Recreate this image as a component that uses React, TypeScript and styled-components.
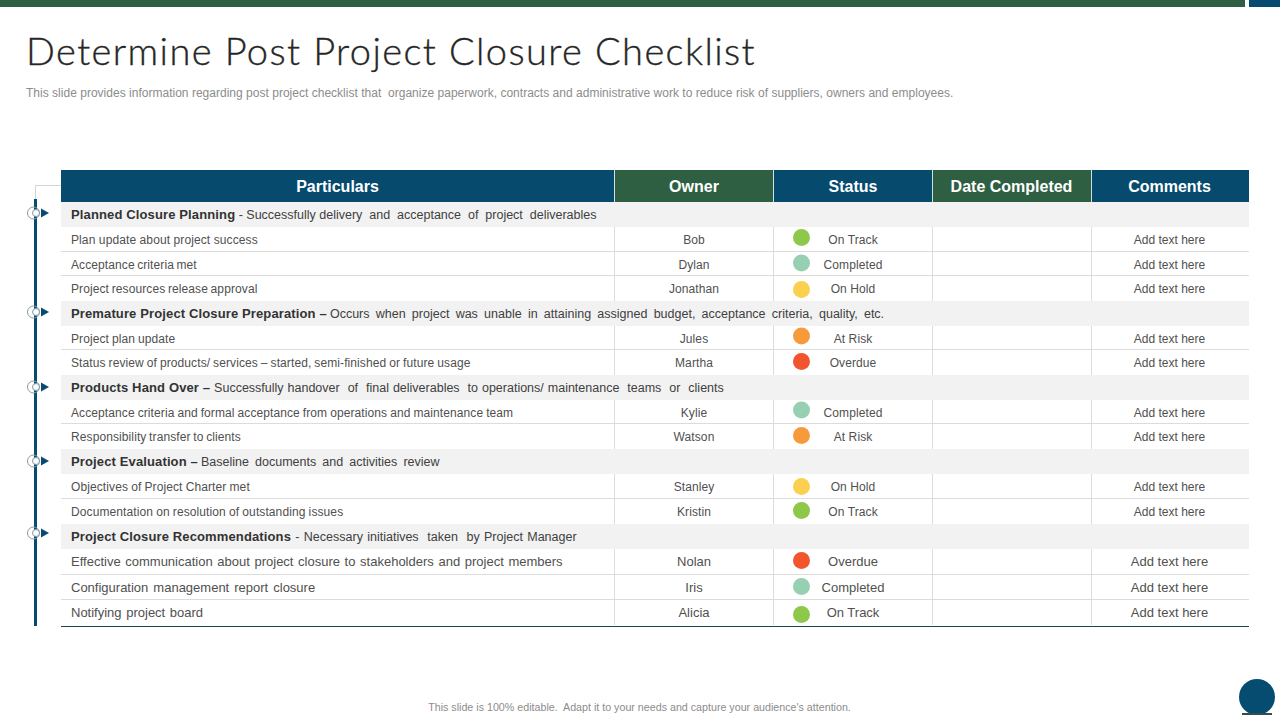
import React from "react";
import styled, { createGlobalStyle } from "styled-components";

const Global = createGlobalStyle`
  html, body { margin: 0; padding: 0; background: #fff; }
  body { width: 1280px; height: 720px; overflow: hidden; font-family: "Liberation Sans", Arial, sans-serif; }
`;

const Page = styled.div`
  width: 1280px; height: 720px; display: flex; flex-direction: column; position: relative; overflow: hidden;
`;
const TopBar = styled.div`
  height: 7px; display: grid; grid-template-columns: 1245px 1fr; column-gap: 4px; flex: none;
`;
const BarPiece = styled.div<{ $c: string }>`background: ${p => p.$c};`;
const Title = styled.h1`
  margin: 20px 0 0 26px; font-family: "Lato", sans-serif; font-weight: 300; font-size: 38px; line-height: 46px;
  color: #262626; letter-spacing: 1.4px; white-space: nowrap; -webkit-text-stroke: 0.35px #262626;
`;
const Sub = styled.p`
  margin: 12px 0 0 26px; font-size: 12px; line-height: 16px; color: #8c8c8c; white-space: pre; letter-spacing: 0.01px; word-spacing: 0.05px;
`;
const Body = styled.div`
  margin-top: 69px; display: flex; padding-left: 27px;
`;
const Rail = styled.div`
  width: 34px; height: 456px; position: relative; flex: none;
`;
const RailLine = styled.div`
  position: absolute; left: 7px; top: 29px; bottom: 0; width: 3px; background: #064c70;
`;
const RailElbow = styled.div`
  position: absolute; left: 8px; top: 15px; width: 26px; height: 15px; border-left: 1px solid #d4d4d4; border-top: 1px solid #d4d4d4; box-sizing: border-box;
`;
const MarkerWrap = styled.svg<{ $top: number }>`
  position: absolute; left: 0; top: ${p => p.$top}px; width: 24px; height: 16px;
`;
const Table = styled.div`
  width: 1188px; display: flex; flex-direction: column; border-bottom: 1px solid #16465a; height: 457px; box-sizing: border-box;
`;
const cols = "554px 159px 159px 159px 157px";
const Head = styled.div`
  display: grid; grid-template-columns: ${cols}; height: 32px; flex: none;
`;
const HeadCell = styled.div<{ $green?: boolean; $last?: boolean; $pr?: number }>`
  background: ${p => (p.$green ? "#2f5f43" : "#064a6e")}; color: #fff; font-weight: 700; font-size: 16px; display: flex; align-items: center; justify-content: center;
  padding: 1px ${p => p.$pr ?? 0}px 0 0; box-sizing: border-box;
  border-right: ${p => (p.$last ? "none" : "1px solid #cfe0e0")};
`;
const Section = styled.div<{ $h: number; $ws: number }>`
  height: ${p => p.$h}px; flex: none; background: #f2f2f2; display: flex; align-items: center; padding-left: 10px;
  font-size: 12.5px; color: #404040; white-space: pre; box-sizing: border-box; word-spacing: ${p => p.$ws}px;
`;
const Strong = styled.b`color: #333; font-size: 13px; letter-spacing: 0.13px; word-spacing: 0;`;
const Row = styled.div<{ $h: number; $last?: boolean }>`
  display: grid; grid-template-columns: ${cols}; height: ${p => p.$h}px; flex: none; box-sizing: border-box;
  border-bottom: ${p => (p.$last ? "none" : "1px solid #dcdcdc")};
`;
const Cell = styled.div<{ $big?: boolean; $spread?: number; $pt?: number }>`
  display: flex; align-items: center; justify-content: center; font-size: ${p => (p.$big ? 13 : 12)}px; color: #505050;
  border-right: 1px solid #dcdcdc; white-space: pre; word-spacing: ${p => p.$spread ?? 0}px; box-sizing: border-box;
  padding-top: ${p => p.$pt ?? (p.$big ? 0 : 1)}px; letter-spacing: ${p => (p.$big ? 0 : 0.1)}px;
`;
const Name = styled(Cell)`justify-content: flex-start; padding-left: 10px;`;
const Empty = styled.div`border-right: 1px solid #dcdcdc;`;
const Comment = styled(Cell)`border-right: none; padding-right: 2px; letter-spacing: 0;`;
const StatusCell = styled(Cell)`
  display: grid; grid-template-columns: 1fr auto 1fr; align-items: center;
`;
const Dot = styled.span<{ $c: string; $shift: number }>`
  width: 17px; height: 17px; border-radius: 50%; background: ${p => p.$c}; margin-left: 19px; justify-self: start; transform: translateY(${p => p.$shift}px);
`;
const Footer = styled.div`
  position: absolute; left: 0; right: 0; top: 701px; text-align: center; font-size: 10.7px; color: #8c8c8c; white-space: pre; padding-right: 1px;
`;
const Badge = styled.div`
  position: absolute; left: 1239px; top: 679px; width: 36px; height: 36px; border-radius: 50%; background: #064c70;
`;
const BadgeLine = styled.div`
  position: absolute; left: 1242px; top: 713px; width: 30px; height: 2px; background: #2f4f4f;
`;

const C = { track: "#8dc84a", done: "#97cfb3", hold: "#fbd04f", risk: "#f79a3c", over: "#f2542d" };
type S = keyof typeof C;
const label: Record<S, string> = { track: "On Track", done: "Completed", hold: "On Hold", risk: "At Risk", over: "Overdue" };

type R = { n: string; o: string; s: S; d: number; h: number; sp?: number; big?: boolean; last?: boolean };
type G = { b: string; t: string; h: number; ws: number; rows: R[] };

const groups: G[] = [
  { b: "Planned Closure Planning", t: " - Successfully delivery  and  acceptance  of  project  deliverables", h: 25, ws: 0, rows: [
    { n: "Plan update about project success", o: "Bob", s: "track", d: -2, h: 25 },
    { n: "Acceptance criteria met", o: "Dylan", s: "done", d: -1.5, h: 24, sp: -1 },
    { n: "Project resources release approval", o: "Jonathan", s: "hold", d: 0, h: 25, sp: -0.8, last: true },
  ] },
  { b: "Premature Project Closure Preparation \u2013", t: " Occurs  when  project  was  unable  in  attaining  assigned  budget,  acceptance  criteria,  quality,  etc.", h: 25, ws: -0.35, rows: [
    { n: "Project plan update", o: "Jules", s: "risk", d: -2.5, h: 24, sp: -0.5 },
    { n: "Status review of products/ services \u2013 started, semi-finished or future usage", o: "Martha", s: "over", d: -2, h: 25, sp: -0.5, last: true },
  ] },
  { b: "Products Hand Over \u2013", t: " Successfully handover  of  final deliverables  to operations/ maintenance  teams  or  clients", h: 25, ws: 0.5, rows: [
    { n: "Acceptance criteria and formal acceptance from operations and maintenance team", o: "Kylie", s: "done", d: -2.5, h: 24, sp: -0.5 },
    { n: "Responsibility transfer to clients", o: "Watson", s: "risk", d: -2, h: 25, sp: -0.75, last: true },
  ] },
  { b: "Project Evaluation \u2013", t: " Baseline  documents  and  activities  review", h: 25, ws: -0.4, rows: [
    { n: "Objectives of Project Charter met", o: "Stanley", s: "hold", d: 0, h: 25, sp: -0.3 },
    { n: "Documentation on resolution of outstanding issues", o: "Kristin", s: "track", d: -2, h: 25, sp: -0.3, last: true },
  ] },
  { b: "Project Closure Recommendations", t: " - Necessary initiatives  taken  by Project Manager", h: 25, ws: 0.85, rows: [
    { n: "Effective  communication  about  project  closure  to  stakeholders  and  project  members", o: "Nolan", s: "over", d: -1, h: 26, big: true, sp: -1.3 },
    { n: "Configuration  management  report  closure", o: "Iris", s: "done", d: -1, h: 25, big: true, sp: -1.1 },
    { n: "Notifying  project  board", o: "Alicia", s: "track", d: 2, h: 25, big: true, sp: -1.3, last: true },
  ] },
];

const markerTops = [35, 134, 209, 283, 355];

const Marker = ({ top }: { top: number }) => (
  <MarkerWrap $top={top} viewBox="0 0 24 16">
    <circle cx="6.5" cy="8" r="6" fill="none" stroke="#8a9aa0" strokeWidth="1" />
    <circle cx="9" cy="8" r="3.5" fill="#fff" stroke="#7f9aa6" strokeWidth="1" />
    <path d="M14 3.5 L22 8 L14 12.5 Z" fill="#064c70" />
  </MarkerWrap>
);

export default function App() {
  return (
    <Page>
      <Global />
      <TopBar>
        <BarPiece $c="#2f5f43" />
        <BarPiece $c="#064a6e" />
      </TopBar>
      <Title>Determine Post Project Closure Checklist</Title>
      <Sub>This slide provides information regarding post project checklist that  organize paperwork, contracts and administrative work to reduce risk of suppliers, owners and employees.</Sub>
      <Body>
        <Rail>
          <RailElbow />
          <RailLine />
          {markerTops.map(t => <Marker key={t} top={t} />)}
        </Rail>
        <Table>
          <Head>
            <HeadCell>Particulars</HeadCell>
            <HeadCell $green>Owner</HeadCell>
            <HeadCell>Status</HeadCell>
            <HeadCell $green $pr={1}>Date Completed</HeadCell>
            <HeadCell $last $pr={2}>Comments</HeadCell>
          </Head>
          {groups.map(g => (
            <React.Fragment key={g.b}>
              <Section $h={g.h} $ws={g.ws}><Strong>{g.b}</Strong>{g.t}</Section>
              {g.rows.map(r => {
                const pt = r.h === 24 ? 2 : undefined;
                return (
                  <Row key={r.n} $h={r.h} $last={r.last}>
                    <Name $big={r.big} $spread={r.sp} $pt={pt}>{r.n}</Name>
                    <Cell $big={r.big} $pt={pt}>{r.o}</Cell>
                    <StatusCell $big={r.big} $pt={pt}>
                      <Dot $c={C[r.s]} $shift={r.d} />
                      <span>{label[r.s]}</span>
                    </StatusCell>
                    <Empty />
                    <Comment $big={r.big} $pt={pt}>Add text here</Comment>
                  </Row>
                );
              })}
            </React.Fragment>
          ))}
        </Table>
      </Body>
      <Footer>This slide is 100% editable.  Adapt it to your needs and capture your audience's attention.</Footer>
      <Badge />
      <BadgeLine />
    </Page>
  );
}
